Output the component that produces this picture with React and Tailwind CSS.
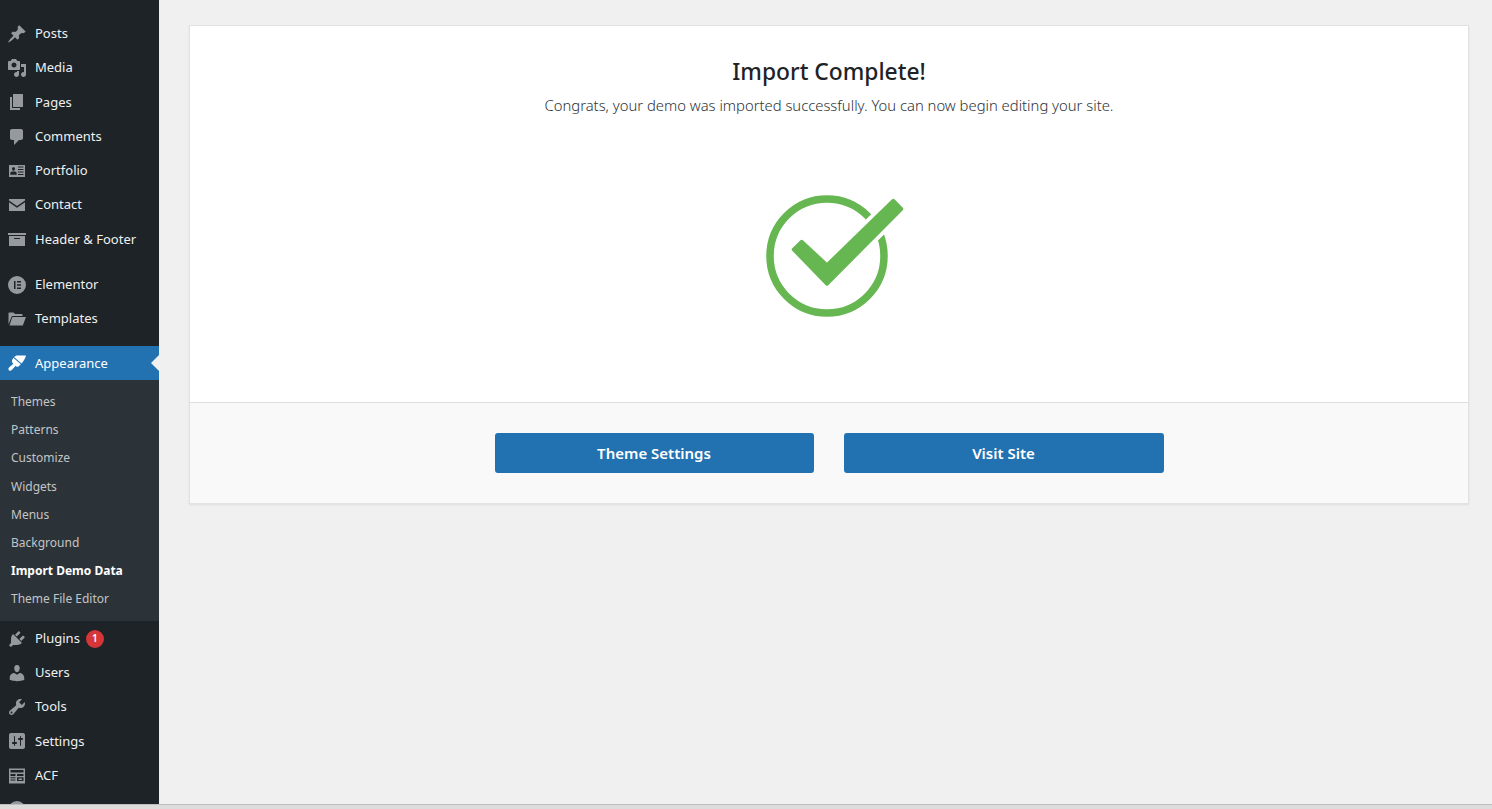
const P = {
  post: "M10.44 3.02l1.82-1.82 6.36 6.35-1.83 1.82c-1.05-.68-2.48-.57-3.41.36l-.75.75c-.92.93-1.04 2.35-.35 3.41l-1.83 1.82-2.41-2.41-2.8 2.79c-.42.42-3.38 2.71-3.8 2.29s1.86-3.39 2.28-3.81l2.79-2.79L4.1 9.36l1.83-1.82c1.05.69 2.48.57 3.4-.36l.75-.75c.93-.92 1.05-2.35.36-3.41z",
  media: "M13 11V4c0-.55-.45-1-1-1h-1.67L9 1H5L3.67 3H2c-.55 0-1 .45-1 1v7c0 .55.45 1 1 1h10c.55 0 1-.45 1-1zM7 4.5c1.38 0 2.5 1.12 2.5 2.5S8.38 9.5 7 9.5 4.5 8.38 4.5 7 5.62 4.5 7 4.5zM14 6h5v10.5c0 1.38-1.12 2.5-2.5 2.5S14 17.88 14 16.5s1.12-2.5 2.5-2.5c.17 0 .34.02.5.05V9h-3V6zm-4 8.05V13h2v3.5c0 1.38-1.12 2.5-2.5 2.5S7 17.88 7 16.5 8.12 14 9.5 14c.17 0 .34.02.5.05z",
  page: "M6 15V2h10v13H6zm-1 1h8v2H3V5h2v11z",
  comments: "M5 2h9c1.1 0 2 .9 2 2v7c0 1.1-.9 2-2 2h-2l-5 5v-5H5c-1.1 0-2-.9-2-2V4c0-1.1.9-2 2-2z",
  portfolio: "M2 4h16v12H2V4zm9 1.500v1h5.500v-1H11zm0 2.500v1h5.500V8H11zm0 2.500v1h5.500v-1H11zm0 2.500v1h5.500v-1H11zM6.500 6.200c-1 0-1.500.7-1.500 1.600S5.500 9.800 6.500 9.800 8 8.700 8 7.800 7.500 6.200 6.500 6.200zM3.300 13.800h6.400v-1.300c0-1-.8-1.900-1.800-1.900H5.100c-1 0-1.800.9-1.800 1.900v1.300z",
  email: "M2 4h16v1.500L10 11 2 5.500V4zm0 3.300l8 5.400 8-5.400V16H2V7.300z",
  archive: "M19 4v2H1V4h18zM2 7h16v10H2V7zm11 3V9H7v1h6z",
  elementor: "M10 1a9 9 0 1 0 0 18 9 9 0 0 0 0-18zM7 6h1.500v8H7V6zm3 0h4v1.500h-4V6zm0 3.200h4v1.500h-4V9.200zm0 3.300h4V14h-4v-1.500z",
  folder: "M1.500 15.500V4.500c0-.6.400-1 1-1h4l1.500 1.500h6.500c.6 0 1 .4 1 1V7H6c-.8 0-1.300.4-1.600 1L1.500 15.500zM6 8h13l-3.200 8.500H2.500L5 8.800c.2-.5.500-.8 1-.8z",
  appearance: "M7 4L9.500 2.500L19 2.500C18.300 5 17 8 14.500 10.500ZM6.300 4.800L13.800 11.200L11.500 13.500C10.800 14 10 14 9.400 13.400L8.700 12.800L5 16.800C4 17.900 2.700 18 1.900 17.200C1.100 16.400 1.300 15.200 2.300 14.300L6.400 10.800L5.700 10C4.800 9 4.700 8 5.200 7Z",
  plugins: "M13.11 4.36L9.87 7.6 8 5.73l3.24-3.24c.35-.34 1.05-.2 1.56.32.52.51.66 1.21.31 1.55zm-8 1.77l.91-1.12 9.01 9.01-1.19.84c-.71.71-2.63 1.16-3.82 1.16H6.14L4.9 17.26c-.59.59-1.54.59-2.12 0-.59-.58-.59-1.53 0-2.12l1.24-1.24v-3.88c0-1.13.4-3.19 1.09-3.89zm7.26 3.97l3.24-3.24c.34-.35 1.04-.21 1.55.31.52.51.66 1.21.31 1.55l-3.24 3.25z",
  users: "M10 9.25c-2.27 0-2.73-3.44-2.73-3.44C7 4.02 7.82 2 9.97 2c2.16 0 2.98 2.02 2.71 3.81 0 0-.41 3.44-2.68 3.44zm0 2.57L12.72 10c2.39 0 4.52 2.33 4.52 4.53v2.49s-3.65 1.13-7.24 1.13c-3.65 0-7.24-1.13-7.24-1.13v-2.49c0-2.25 1.94-4.48 4.47-4.48z",
  tools: "M16.68 9.77c-1.34 1.34-3.3 1.67-4.95.99l-5.41 6.52c-.99.99-2.59.99-3.57 0-.99-.98-.99-2.58 0-3.57l6.52-5.42c-.68-1.65-.35-3.61.99-4.95 1.28-1.28 3.12-1.62 4.71-1.06l-2.89 2.89 2.82 2.82 2.86-2.87c.53 1.58.18 3.4-1.08 4.67zM3.81 16.21c.4.39 1.04.39 1.43 0 .4-.4.4-1.04 0-1.43-.39-.4-1.03-.4-1.43 0-.39.39-.39 1.03 0 1.43z",
  settings: "M18 16V4c0-1.1-.9-2-2-2H4c-1.1 0-2 .9-2 2v12c0 1.1.9 2 2 2h12c1.1 0 2-.9 2-2zM8 11h1c.55 0 1 .45 1 1s-.45 1-1 1H8v1.5c0 .28-.22.5-.5.5s-.5-.22-.5-.5V13H6c-.55 0-1-.45-1-1s.45-1 1-1h1V5.500c0-.28.22-.5.5-.5s.5.22.5.5V11zm5-2h-1c-.55 0-1-.45-1-1s.45-1 1-1h1V5.500c0-.28.22-.5.5-.5s.5.22.5.5V7h1c.55 0 1 .45 1 1s-.45 1-1 1h-1v5.500c0 .28-.22.5-.5.5s-.5-.22-.5-.5V9z",
  acf: "M2 2.500h16v15H2v-15zM3.500 4v2.500h13V4h-13zm0 4v2h5V8h-5zm6.500 0v2h6.500V8H10zm-6.500 3.200v1h5v-1h-5zm0 2.300v1h5v-1h-5zm6.500-2.300V15h6.500v-3.800H10zm1.500 1.300h3.500V14h-3.500v-1.500z",
  circle: "M10 1a9 9 0 1 0 0 18 9 9 0 0 0 0-18z",
};

function Icon({ d, active }) {
  return (
    <svg viewBox="0 0 20 20" className={active ? "w-5 h-5 shrink-0 fill-white" : "w-5 h-5 shrink-0 fill-[#969a9e]"}>
      <path d={d} fillRule="evenodd" />
    </svg>
  );
}

function Item({ d, label, badge }) {
  return (
    <div className="h-[34.25px] flex items-center pl-[7px] text-[#f0f0f1]">
      <Icon d={d} />
      <span className="ml-2 text-[13px]">{label}</span>
      {badge && (
        <span className="ml-[6px] w-[18px] h-[18px] rounded-full bg-[#d63638] text-white text-[10px] font-semibold flex items-center justify-center">
          {badge}
        </span>
      )}
    </div>
  );
}

const subs = ["Themes", "Patterns", "Customize", "Widgets", "Menus", "Background", "Import Demo Data", "Theme File Editor"];

function Sidebar() {
  return (
    <aside className="w-[159px] shrink-0 bg-[#1d2327] overflow-hidden pt-[16.75px]">
      <Item d={P.post} label="Posts" />
      <Item d={P.media} label="Media" />
      <Item d={P.page} label="Pages" />
      <Item d={P.comments} label="Comments" />
      <Item d={P.portfolio} label="Portfolio" />
      <Item d={P.email} label="Contact" />
      <Item d={P.archive} label="Header & Footer" />
      <div className="h-[11px]" />
      <Item d={P.elementor} label="Elementor" />
      <Item d={P.folder} label="Templates" />
      <div className="h-[10.25px]" />
      <div className="relative h-[34px] bg-[#2271b1] flex items-center pl-[7px] text-white">
        <Icon d={P.appearance} active />
        <span className="ml-2 text-[13px]">Appearance</span>
        <span className="absolute right-0 top-1/2 -translate-y-1/2 border-y-[8px] border-r-[8px] border-y-transparent border-r-[#f0f0f1]" />
      </div>
      <div className="bg-[#2c3338] pt-[7.75px] pb-[7.25px]">
        {subs.map((s) => (
          <div
            key={s}
            className={
              s === "Import Demo Data"
                ? "h-[28.2px] pl-[11px] flex items-center text-[12px] font-bold text-white"
                : "h-[28.2px] pl-[11px] flex items-center text-[12px] text-[#c3c4c7]"
            }
          >
            {s}
          </div>
        ))}
      </div>
      <div className="h-[0.75px]" />
      <Item d={P.plugins} label="Plugins" badge="1" />
      <Item d={P.users} label="Users" />
      <Item d={P.tools} label="Tools" />
      <Item d={P.settings} label="Settings" />
      <Item d={P.acf} label="ACF" />
      <Item d={P.circle} label="" />
    </aside>
  );
}

function Check() {
  const pts = "43.5,69.5 51.7,61.5 77,85 143.300,20.500 151.500,29 77,104";
  return (
    <svg viewBox="0 0 158 150" className="w-[158px] h-[150px]">
      <circle cx="77" cy="76" r="57" fill="none" stroke="#66b651" strokeWidth="7.500" />
      <polygon points={pts} fill="#fff" stroke="#fff" strokeWidth="11" strokeLinejoin="round" />
      <polygon points={pts} fill="#66b651" stroke="#66b651" strokeWidth="3.500" strokeLinejoin="round" />
    </svg>
  );
}

function Button({ children, w }) {
  return (
    <button className={w + " h-10 rounded-[3px] bg-[#2271b1] text-white text-[15px] font-semibold"}>
      {children}
    </button>
  );
}

export default function App() {
  return (
    <div className="h-[809px] w-full overflow-hidden flex flex-col bg-[#f0f0f1] font-['Noto_Sans',sans-serif]">
      <div className="h-[804px] flex">
        <Sidebar />
        <main className="flex-1 pl-[30px] pr-[23px] pt-[25px]">
          <section className="border border-[#e2e2e2] shadow-[0_1px_2px_rgba(0,0,0,0.08)] bg-white">
            <div className="h-[376px] flex flex-col items-center pt-[28px]">
              <h1 className="text-[22.8px] leading-9 font-medium text-[#1d2327]">Import Complete!</h1>
              <p className="mt-[3px] text-[14.8px] leading-6 font-light text-[#2c3338]">
                Congrats, your demo was imported successfully. You can now begin editing your site.
              </p>
              <div className="mt-[63px]">
                <Check />
              </div>
            </div>
            <div className="h-[101px] border-t border-[#dedede] bg-[#f9f9f9] pt-[30px] flex justify-center gap-[30px]">
              <Button w="w-[319px]">Theme Settings</Button>
              <Button w="w-[320px]">Visit Site</Button>
            </div>
          </section>
        </main>
      </div>
      <div className="h-[5px] border-t border-[#bdbdbd] bg-[#dcdcdc]" />
    </div>
  );
}
